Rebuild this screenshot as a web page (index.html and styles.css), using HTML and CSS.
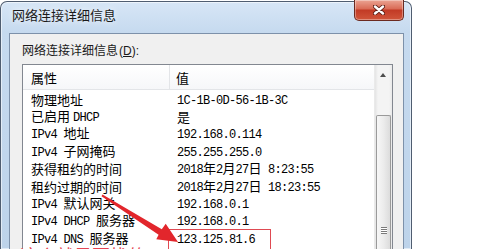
FILE: index.html
```html
<!DOCTYPE html>
<html>
<head>
  <title>网络连接详细信息</title>
  <link rel="stylesheet" href="styles.css">
</head>
<body>

  <div class="window">
    <div class="titlebar">
      <span class="title">网络连接详细信息</span>
      <div class="close">
        <svg width="12" height="10" viewBox="0 0 12 10">
          <path d="M2 1.5 L10 8.5 M10 1.5 L2 8.5" stroke="#5a1c14" stroke-width="4.2" stroke-linecap="round"/>
          <path d="M2 1.5 L10 8.5 M10 1.5 L2 8.5" stroke="#fff" stroke-width="2.4" stroke-linecap="round"/>
        </svg>
      </div>
    </div>

    <div class="body">
      <div class="caption">网络连接详细信息<span class="lat">(<u>D</u>):</span></div>

      <div class="listbox">
        <div class="list">
          <div class="head">
            <div class="c1">属性</div>
            <div class="c2">值</div>
          </div>
          <div class="rows">
            <div class="row"><div class="c1">物理地址</div><div class="c2"><span class="en">1C-1B-0D-56-1B-3C</span></div></div>
            <div class="row"><div class="c1">已启用 <span class="en">DHCP</span></div><div class="c2">是</div></div>
            <div class="row"><div class="c1"><span class="en">IPv4 </span>地址</div><div class="c2"><span class="en">192.168.0.114</span></div></div>
            <div class="row"><div class="c1"><span class="en">IPv4 </span>子网掩码</div><div class="c2"><span class="en">255.255.255.0</span></div></div>
            <div class="row"><div class="c1">获得租约的时间</div><div class="c2"><span class="en">2018</span>年<span class="en">2</span>月<span class="en">27</span>日<span class="en"> 8:23:55</span></div></div>
            <div class="row"><div class="c1">租约过期的时间</div><div class="c2"><span class="en">2018</span>年<span class="en">2</span>月<span class="en">27</span>日<span class="en"> 18:23:55</span></div></div>
            <div class="row"><div class="c1"><span class="en">IPv4 </span>默认网关</div><div class="c2"><span class="en">192.168.0.1</span></div></div>
            <div class="row"><div class="c1"><span class="en">IPv4 DHCP </span>服务器</div><div class="c2"><span class="en">192.168.0.1</span></div></div>
            <div class="row"><div class="c1"><span class="en">IPv4 DNS </span>服务器</div><div class="c2"><span class="en">123.125.81.6</span></div></div>
          </div>
        </div>

        <div class="scroll">
          <div class="up"></div>
          <div class="thumb">
            <div class="grip"></div>
          </div>
        </div>
      </div>
    </div>
  </div>

  <!-- red annotation drawn over the screenshot -->
  <div class="mark"></div>
  <svg class="arrow" width="490" height="249" viewBox="0 0 490 249">
    <polygon points="102.5,194.6 161.8,229.2 165.7,223.8 178,242 156.3,239.2 158.6,234.8 101.5,196.3" fill="#e2262c"/>
  </svg>
  <div class="note">这个就是要找的DNS</div>

</body>
</html>
```

FILE: styles.css
```css
body {
  margin: 0;
  width: 490px;
  height: 249px;
  overflow: hidden;
  position: relative;
  background: #fff;
  font-family: "Noto Sans CJK SC", sans-serif;
  color: #000;
}

.window {
  margin-top: 1px;
  width: 412px;
  height: 248px;
  box-sizing: border-box;
  border: 1px solid #4f5d70;
  border-bottom: none;
  border-radius: 7px 7px 0 0;
  background: linear-gradient(#d7e6f6, #c6daef 30px, #bdd3ea);
  box-shadow: inset 0 0 0 1px rgba(255, 255, 255, 0.55);
  padding: 0 7px 0 8px;
  display: flex;
  flex-direction: column;
}

.titlebar {
  height: 31px;
  flex-shrink: 0;
  display: flex;
  justify-content: space-between;
  align-items: flex-start;
}

.title {
  margin: 4px 0 0 3px;
  font-size: 13px;
  line-height: 18px;
  color: #1a1a1a;
  text-shadow: 0 0 6px #fff;
}

.close {
  margin-top: -2px;
  width: 50px;
  height: 21px;
  box-sizing: border-box;
  border: 1px solid #6b2a20;
  border-top: none;
  border-radius: 0 0 5px 5px;
  background: linear-gradient(#eba493, #d96a55 45%, #c23a25 50%, #d0553a);
  box-shadow: inset 0 0 0 1px rgba(255, 255, 255, 0.35);
  display: flex;
  justify-content: center;
  align-items: center;
}

.body {
  flex: 1;
  min-height: 0;
  display: flex;
  flex-direction: column;
  background: #f0f0f0;
  border: 1px solid #7d91aa;
  border-bottom: none;
  padding: 0 10px 0 12px;
}

.caption {
  margin: 7px 0 4px;
  font-size: 12px;
  line-height: 18px;
  color: #1a1a1a;
}

.caption .lat {
  font-family: "Liberation Sans", sans-serif;
  margin-left: 1px;
}

.listbox {
  flex: 1;
  min-height: 0;
  overflow: hidden;
  display: flex;
  border: 1px solid #828790;
  border-bottom: none;
  background: #fff;
}

.list {
  flex: 1;
  font-size: 13px;
}

.head {
  height: 24px;
  display: flex;
  align-items: center;
  border-bottom: 1px solid #e3e5e8;
  background: linear-gradient(#fff, #f6f7f9);
}

.head .c1 {
  height: 100%;
  display: flex;
  align-items: center;
  border-right: 1px solid #e3e5e8;
}

.c1 {
  width: 147px;
  box-sizing: border-box;
  padding-left: 8px;
  white-space: nowrap;
}

.c2 {
  padding-left: 6px;
  white-space: nowrap;
}

.rows {
  padding-top: 1px;
}

.row {
  height: 17.4px;
  line-height: 16px;
  display: flex;
  align-items: center;
}

.row .c2 {
  padding-left: 7px;
}

.en {
  font-family: "Liberation Mono", monospace;
  font-size: 12px;
  letter-spacing: -0.7px;
  white-space: pre;
}

.scroll {
  width: 17px;
  display: flex;
  flex-direction: column;
  background: linear-gradient(90deg, #e4e4e4, #f4f4f4 3px, #f4f4f4 14px, #e9e9e9);
  border-left: 1px solid #eaeaea;
}

.up {
  height: 50px;
  flex-shrink: 0;
  position: relative;
}

.up::after {
  content: "";
  position: absolute;
  left: 5px;
  top: 8px;
  border-left: 3.5px solid transparent;
  border-right: 3.5px solid transparent;
  border-bottom: 4px solid #4d4d4d;
}

.thumb {
  flex: 1;
  margin: 0 1px;
  border: 1px solid #9a9a9a;
  border-bottom: none;
  border-radius: 2px 2px 0 0;
  background: linear-gradient(90deg, #f7f7f7, #ececec 50%, #dcdcdc);
  display: flex;
  justify-content: center;
}

.grip {
  margin-top: 111px;
  width: 6px;
  height: 7px;
  background: repeating-linear-gradient(#7a7a7a 0 1px, #fff 1px 2px);
}

.mark {
  position: absolute;
  left: 168px;
  top: 229px;
  width: 101px;
  height: 20px;
  border: 1px solid #df4a52;
  border-bottom: none;
}

.arrow {
  position: absolute;
  left: 0;
  top: 0;
}

.note {
  position: absolute;
  left: 20px;
  top: 245px;
  font-size: 18px;
  line-height: 20px;
  color: #e54552;
}
```
